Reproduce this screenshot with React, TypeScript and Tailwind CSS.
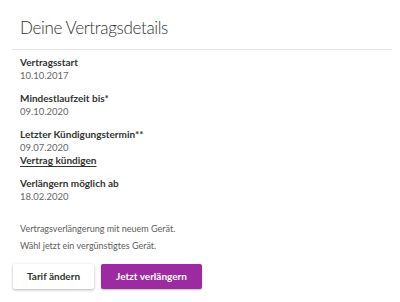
import React from "react";

const items = [
  { label: "Vertragsstart", value: "10.10.2017" },
  { label: "Mindestlaufzeit bis*", value: "09.10.2020" },
  { label: "Letzter Kündigungstermin**", value: "09.07.2020", link: "Vertrag kündigen" },
  { label: "Verlängern möglich ab", value: "18.02.2020" },
];

export default function App() {
  return (
    <div className="w-[400px] h-[302px] bg-white overflow-hidden" style={{ fontFamily: "Lato, 'Open Sans', sans-serif" }}>
      <div className="pt-[16px] pl-5 pb-[10px]">
        <h1 className="text-[17px] leading-[23px] font-light tracking-[-0.35px] text-[#333]">Deine Vertragsdetails</h1>
      </div>
      <div className="ml-3 mr-2 h-px bg-[#e6e6e6]" />
      <div className="pl-5 pt-[6px]">
        {items.map((it) => (
          <div key={it.label} className="mb-[10px]">
            <div className="text-[10px] leading-[13px] font-bold text-[#333]">{it.label}</div>
            <div className="text-[9.5px] leading-[13px] text-[#666]">{it.value}</div>
            {it.link && (
              <a href="#" className="block text-[10px] leading-[13px] font-bold text-[#333] underline underline-offset-2">
                {it.link}
              </a>
            )}
          </div>
        ))}
        <div className="pt-[7px] text-[9px] leading-[17px] text-[#5e5e5e]">
          <p>Vertragsverlängerung mit neuem Gerät.</p>
          <p>Wähl jetzt ein vergünstigtes Gerät.</p>
        </div>
      </div>
      <div className="pl-[13px] pt-[10px] flex gap-[7px]">
        <button className="w-[81px] h-[25px] rounded-[2px] bg-white text-[10px] font-bold text-[#333] shadow-[0_1px_3px_rgba(0,0,0,0.3)]">
          Tarif ändern
        </button>
        <button className="w-[101px] h-[25px] rounded-[2px] bg-[#9c2aa0] text-[10px] font-bold text-white shadow-[0_1px_2px_rgba(0,0,0,0.25)]">
          Jetzt verlängern
        </button>
      </div>
    </div>
  );
}
